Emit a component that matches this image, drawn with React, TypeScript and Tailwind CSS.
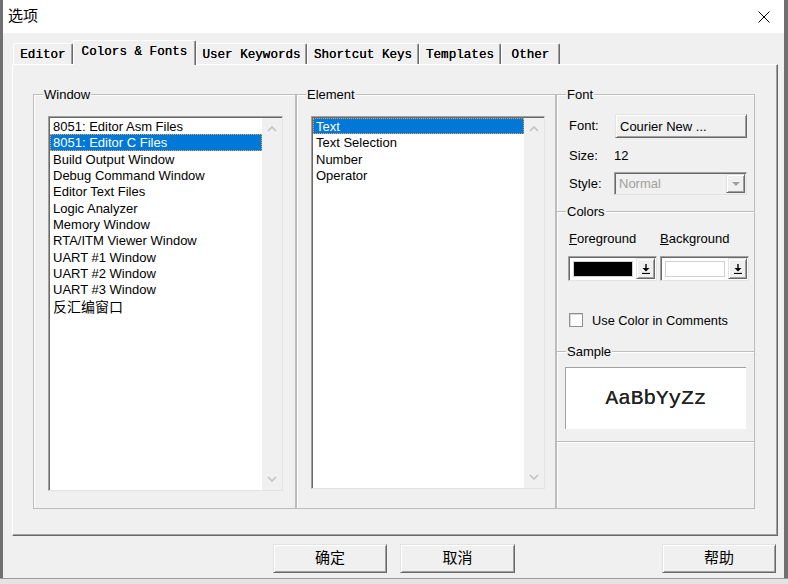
import React from 'react'

const windows = [
  '8051: Editor Asm Files',
  '8051: Editor C Files',
  'Build Output Window',
  'Debug Command Window',
  'Editor Text Files',
  'Logic Analyzer',
  'Memory Window',
  'RTA/ITM Viewer Window',
  'UART #1 Window',
  'UART #2 Window',
  'UART #3 Window',
  '反汇编窗口',
]

const elements = ['Text', 'Text Selection', 'Number', 'Operator']

const tabs = [
  { label: 'Editor', width: 'w-[60px]' },
  { label: 'Colors & Fonts', width: 'w-[123px]', active: true },
  { label: 'User Keywords', width: 'w-[111px]' },
  { label: 'Shortcut Keys', width: 'w-[112px]' },
  { label: 'Templates', width: 'w-[82px]' },
  { label: 'Other', width: 'w-[59px]' },
]

function Chevron({ down }: { down?: boolean }) {
  return (
    <svg width="10" height="6" viewBox="0 0 10 6" className={down ? 'rotate-180' : ''}>
      <path d="M1 5 L5 1 L9 5" fill="none" stroke="#c2c2c2" strokeWidth="1.6" />
    </svg>
  )
}

function DropArrow() {
  return (
    <svg width="8" height="10" viewBox="0 0 8 10">
      <path d="M4 0 V6" stroke="#000" strokeWidth="1.4" />
      <path d="M0.5 4 L4 7.5 L7.5 4 Z" fill="#000" />
      <path d="M0 9.5 H8" stroke="#000" strokeWidth="1.2" />
    </svg>
  )
}

function ListBox({ items, selected, className }: { items: string[]; selected: number; className: string }) {
  return (
    <div
      className={`flex bg-white border border-t-[#a0a0a0] border-l-[#a0a0a0] border-r-[#e3e3e3] border-b-[#e3e3e3] shadow-[inset_1px_1px_0_#696969] ${className}`}
    >
      <div className="flex-1 pt-[1px] pl-[1px]">
        {items.map((item, i) => (
          <div
            key={item}
            className={`h-[16.35px] leading-[18px] pl-[3px] whitespace-nowrap ${
              i === selected
                ? 'bg-[#0078d7] text-white outline outline-1 outline-dotted outline-[#f5a04a] -outline-offset-1'
                : 'text-black'
            } ${/[\u4e00-\u9fff]/.test(item) ? 'text-[14px]' : ''}`}
          >
            {item}
          </div>
        ))}
      </div>
      <div className="w-[20px] mt-[1px] bg-[#f0f0f0] flex flex-col justify-between items-center pt-[8px] pb-[8px]">
        <Chevron />
        <Chevron down />
      </div>
    </div>
  )
}

function Group({ label, className, children }: { label: string; className: string; children?: React.ReactNode }) {
  return (
    <div className={`border-[#bcbcbc] shadow-[inset_1px_1px_0_#fff] ${className}`}>
      <span className="block w-fit -mt-[8px] ml-[9px] px-[1px] h-[15px] leading-[16px] bg-[#f0f0f0]">{label}</span>
      {children}
    </div>
  )
}

function RaisedButton({ className, children }: { className: string; children?: React.ReactNode }) {
  return (
    <div
      className={`flex items-center bg-[#f0f0f0] border border-t-[#e3e3e3] border-l-[#e3e3e3] border-r-[#696969] border-b-[#696969] shadow-[inset_1px_1px_0_#fff,inset_-1px_-1px_0_#a0a0a0] ${className}`}
    >
      {children}
    </div>
  )
}

function ColorCombo({ color }: { color: string }) {
  return (
    <div className="w-[89px] h-[25px] flex items-center bg-white border border-t-[#a0a0a0] border-l-[#a0a0a0] border-r-[#e3e3e3] border-b-[#e3e3e3] shadow-[inset_1px_1px_0_#696969]">
      <div className={`ml-[4px] w-[60px] h-[16px] border border-[#d0d0d0] ${color}`} />
      <RaisedButton className="ml-auto mr-[1px] w-[19px] h-[21px] justify-center">
        <DropArrow />
      </RaisedButton>
    </div>
  )
}

export default function App() {
  return (
    <div className="w-[788px] h-[584px] flex flex-col bg-[#f0f0f0] text-[13px] text-black overflow-hidden font-['Liberation_Sans','Noto_Sans_CJK_SC',Arial,sans-serif]">
      <div className="h-[578px] flex border-l-[3px] border-r-[4px] border-[#707070]">
        <div className="flex-1 flex flex-col">
          {/* Title bar */}
          <div className="h-[33px] bg-white flex items-center pl-[5px] pr-[14px]">
            <span className="text-[15px]">选项</span>
            <svg width="12" height="12" viewBox="0 0 12 12" className="ml-auto">
              <path d="M0.5 0.5 L11.5 11.5 M11.5 0.5 L0.5 11.5" stroke="#000" strokeWidth="1" />
            </svg>
          </div>

          {/* Tabs */}
          <div className="mt-[7px] ml-[10px] h-[24px] flex items-end relative z-10 font-['Liberation_Mono',monospace]">
            {tabs.map((t) => (
              <div
                key={t.label}
                className={`${t.width} flex items-center justify-center rounded-t-[2px] border-l border-t border-r border-l-white border-t-white border-r-[#696969] shadow-[inset_-1px_0_0_#a0a0a0] text-[12.6px] whitespace-nowrap [text-shadow:0_0_0.4px_#000] ${
                  t.active ? 'h-[25px] -mb-[1px] bg-[#f0f0f0] pb-[1px]' : 'h-[21px] pt-[2px]'
                }`}
              >
                {t.label}
              </div>
            ))}
          </div>

          {/* Panel */}
          <div className="ml-[9px] w-[766px] h-[472px] border-l border-t border-r border-b border-l-white border-t-white border-r-[#696969] border-b-[#696969] shadow-[inset_-1px_-1px_0_#a0a0a0] pl-[20px] pt-[29px] flex items-start">
            <Group label="Window" className="w-[263px] h-[415px] border">
              <ListBox items={windows} selected={1} className="ml-[14px] mt-[14px] w-[235px] h-[375px]" />
            </Group>
            <Group label="Element" className="w-[260px] h-[415px] border">
              <ListBox items={elements} selected={0} className="ml-[14px] mt-[14px] w-[234px] h-[373px]" />
            </Group>
            <div className="w-[199px] flex flex-col">
              <Group label="Font" className="h-[117px] border-t border-l border-r">
                <div className="flex items-center mt-[12px] ml-[12px] h-[24px]">
                  <span className="w-[46px]">Font:</span>
                  <RaisedButton className="w-[132px] h-[24px] pl-[4px] pt-[1px]">Courier New ...</RaisedButton>
                </div>
                <div className="flex items-center mt-[9px] ml-[12px] h-[16px] pt-[1px]">
                  <span className="w-[45px]">Size:</span>
                  <span>12</span>
                </div>
                <div className="flex items-center mt-[9px] ml-[12px] h-[23px]">
                  <span className="w-[45px] pt-[1px]">Style:</span>
                  <div className="w-[133px] h-[23px] flex items-center border border-t-[#a0a0a0] border-l-[#a0a0a0] border-r-[#e3e3e3] border-b-[#e3e3e3] shadow-[inset_1px_1px_0_#696969]">
                    <span className="pl-[4px] pt-[1px] text-[#a0a0a0]">Normal</span>
                    <RaisedButton className="ml-auto mr-[1px] w-[19px] h-[19px] justify-center">
                      <svg width="8" height="4" viewBox="0 0 8 4">
                        <path d="M0 0 H8 L4 4 Z" fill="#a0a0a0" />
                      </svg>
                    </RaisedButton>
                  </div>
                </div>
              </Group>
              <Group label="Colors" className="h-[140px] border-t border-l border-r">
                <div className="flex mt-[11px] ml-[12px] h-[16px] leading-[17px]">
                  <span className="w-[91px]">
                    <u>F</u>oreground
                  </span>
                  <span>
                    <u>B</u>ackground
                  </span>
                </div>
                <div className="flex mt-[10px] ml-[11px] gap-[3px]">
                  <ColorCombo color="bg-black" />
                  <ColorCombo color="bg-white" />
                </div>
                <div className="flex items-center mt-[32px] ml-[12px] h-[14px]">
                  <div className="w-[14px] h-[14px] bg-white border border-[#8f8f8f] shadow-[inset_1px_1px_0_#d8d8d8]" />
                  <span className="ml-[9px] pt-[1px] text-[12.8px]">Use Color in Comments</span>
                </div>
              </Group>
              <Group label="Sample" className="h-[90px] border-t border-l border-r">
                <div className="mt-[8px] ml-[8px] w-[181px] h-[62px] bg-white border-t border-l border-[#a0a0a0] flex items-center justify-center">
                  <span className="text-[21px] text-[#222] font-['Liberation_Mono',monospace] [text-shadow:0_0_0.6px_#222]">
                    AaBbYyZz
                  </span>
                </div>
              </Group>
              <div className="h-[68px] border border-[#bcbcbc] shadow-[inset_1px_1px_0_#fff]" />
            </div>
          </div>

          {/* Buttons */}
          <div className="flex mt-[8px] h-[29px] text-[15px]">
            <RaisedButton className="ml-[270px] w-[114px] h-[29px] justify-center border-[#3c3c3c]">确定</RaisedButton>
            <RaisedButton className="ml-[13px] w-[115px] h-[29px] justify-center">取消</RaisedButton>
            <RaisedButton className="ml-auto mr-[8px] w-[114px] h-[29px] justify-center">帮助</RaisedButton>
          </div>
        </div>
      </div>
      <div className="h-[6px] border-t border-[#9a9a9a] bg-[#e4e4e4]" />
    </div>
  )
}
